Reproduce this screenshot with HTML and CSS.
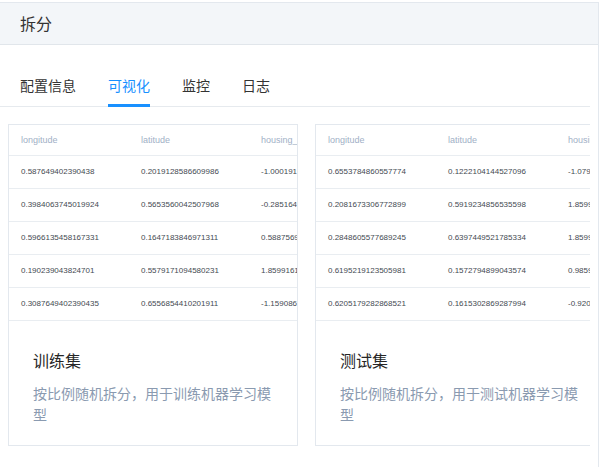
FILE: index.html
```html
<!DOCTYPE html>
<html lang="zh-CN">
<head>
<meta charset="utf-8">
<title>拆分</title>
<link rel="stylesheet" href="styles.css">
</head>
<body>
<div class="panel">
  <div class="panel-head">拆分</div>
  <div class="panel-body">
    <div class="tabs">
      <div class="tab">配置信息</div>
      <div class="tab active">可视化</div>
      <div class="tab">监控</div>
      <div class="tab">日志</div>
    </div>
    <div class="cards">
      <div class="card">
        <div class="table-wrap">
          <table class="data">
            <thead><tr><th>longitude</th><th>latitude</th><th>housing_median_age</th></tr></thead>
            <tbody>
              <tr><td>0.587649402390438</td><td>0.2019128586609986</td><td>-1.000191915</td></tr>
              <tr><td>0.3984063745019924</td><td>0.5653560042507968</td><td>-0.285164912</td></tr>
              <tr><td>0.5966135458167331</td><td>0.1647183846971311</td><td>0.588756912</td></tr>
              <tr><td>0.190239043824701</td><td>0.5579171094580231</td><td>1.859916123</td></tr>
              <tr><td>0.3087649402390435</td><td>0.6556854410201911</td><td>-1.159086512</td></tr>
            </tbody>
          </table>
        </div>
        <div class="card-info">
          <div class="card-title">训练集</div>
          <div class="card-desc">按比例随机拆分，用于训练机器学习模型</div>
        </div>
      </div>
      <div class="card">
        <div class="table-wrap">
          <table class="data">
            <thead><tr><th>longitude</th><th>latitude</th><th>housing_median_age</th></tr></thead>
            <tbody>
              <tr><td>0.6553784860557774</td><td>0.1222104144527096</td><td>-1.079512</td></tr>
              <tr><td>0.2081673306772899</td><td>0.5919234856535598</td><td>1.859916</td></tr>
              <tr><td>0.2848605577689245</td><td>0.6397449521785334</td><td>1.859916</td></tr>
              <tr><td>0.6195219123505981</td><td>0.1572794899043574</td><td>0.985916</td></tr>
              <tr><td>0.6205179282868521</td><td>0.1615302869287994</td><td>-0.920512</td></tr>
            </tbody>
          </table>
        </div>
        <div class="card-info">
          <div class="card-title">测试集</div>
          <div class="card-desc">按比例随机拆分，用于测试机器学习模型</div>
        </div>
      </div>
    </div>
  </div>
</div>
</body>
</html>
```

FILE: styles.css
```css
html, body {
  margin: 0;
  padding: 0;
  background: #ffffff;
}
body {
  font-family: "Noto Sans CJK SC", "Liberation Sans", sans-serif;
  color: #333333;
}
.panel {
  margin-top: 2px;
  width: 598px;
  height: 465px;
  border-top: 1px solid #e3e8ee;
  border-right: 1px solid #e3e8ee;
  overflow: hidden;
}
.panel-head {
  height: 41px;
  line-height: 41px;
  padding-left: 20px;
  font-size: 16px;
  color: #333333;
  background: #f3f6f9;
  border-bottom: 1px solid #e1e6eb;
}
.panel-body {
  width: 590px;
  overflow: hidden;
}
.tabs {
  display: flex;
  gap: 32px;
  padding: 30px 0 0 20px;
  border-bottom: 1px solid #e6eaee;
}
.tab {
  position: relative;
  font-size: 14px;
  line-height: 20px;
  padding-bottom: 11px;
  color: #333333;
}
.tab.active {
  color: #1890ff;
}
.tab.active::after {
  content: "";
  position: absolute;
  left: 0;
  right: 0;
  bottom: -1px;
  height: 3px;
  background: #1890ff;
}
.cards {
  display: flex;
  gap: 17px;
  padding: 17px 0 0 8px;
}
.card {
  flex: 0 0 290px;
  width: 290px;
  border: 1px solid #e3e8ee;
  box-sizing: border-box;
  background: #fff;
}
.table-wrap {
  overflow: hidden;
}
.data {
  border-collapse: collapse;
  table-layout: fixed;
  width: 360px;
  font-family: "Liberation Sans", Arial, sans-serif;
}
.data th, .data td {
  width: 120px;
  padding: 0 0 0 12px;
  text-align: left;
  white-space: nowrap;
  overflow: hidden;
  box-sizing: border-box;
}
.data th {
  height: 30px;
  font-size: 9px;
  font-weight: normal;
  color: #9fb0c6;
  border-bottom: 1px solid #e9edf1;
}
.data td {
  height: 33px;
  font-size: 8px;
  color: #444a52;
  border-bottom: 1px solid #e9edf1;
}
.card-info {
  padding: 27px 24px 20px 24px;
}
.card-title {
  font-size: 16px;
  line-height: 24px;
  color: #262626;
}
.card-desc {
  margin-top: 11px;
  font-size: 14px;
  line-height: 21px;
  color: #8a9ab0;
}
```
